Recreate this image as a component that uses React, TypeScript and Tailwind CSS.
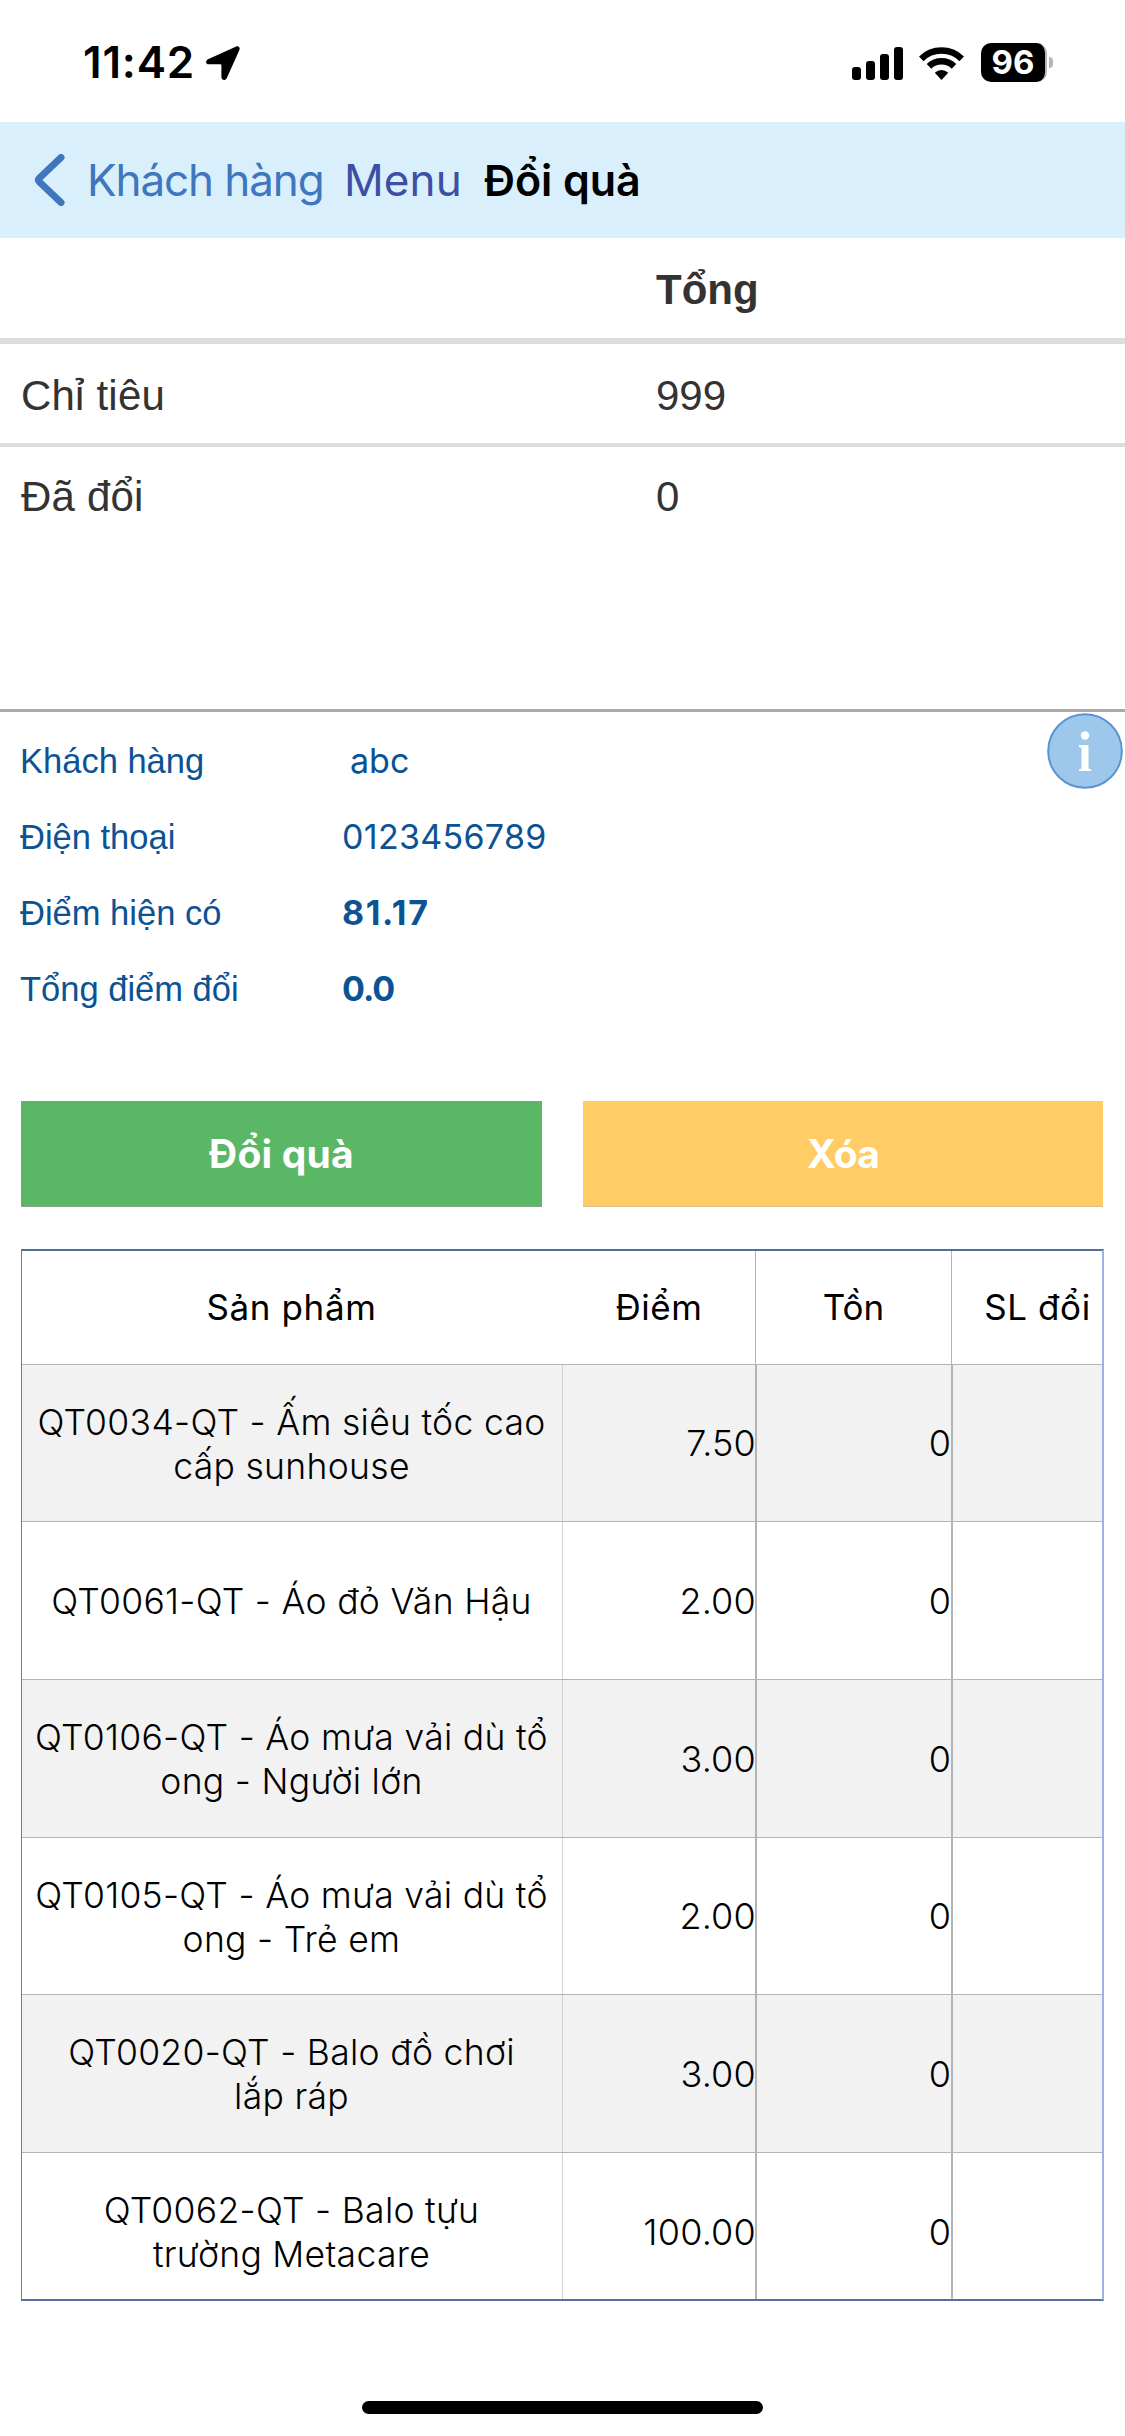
import clsx from "clsx";

const summary = [
  { label: "Chỉ tiêu", value: "999" },
  { label: "Đã đổi", value: "0" },
];

const products = [
  { name: ["QT0034-QT - Ấm siêu tốc cao", "cấp sunhouse"], points: "7.50", stock: 0 },
  { name: ["QT0061-QT - Áo đỏ Văn Hậu"], points: "2.00", stock: 0 },
  { name: ["QT0106-QT - Áo mưa vải dù tổ", "ong - Người lớn"], points: "3.00", stock: 0 },
  { name: ["QT0105-QT - Áo mưa vải dù tổ", "ong - Trẻ em"], points: "2.00", stock: 0 },
  { name: ["QT0020-QT - Balo đồ chơi", "lắp ráp"], points: "3.00", stock: 0 },
  { name: ["QT0062-QT - Balo tựu", "trường Metacare"], points: "100.00", stock: 0 },
];

function StatusBar() {
  return (
    <div className="flex h-[122px] items-start justify-between pl-[83px] pr-[72px] pt-[43px]">
      <div className="flex items-center">
        <span className="w-[123px] whitespace-nowrap text-[44px] font-semibold leading-[39px] tracking-[0.8px]">11:42</span>
        <svg width="34" height="34" viewBox="0 0 34 34" fill="#000">
          <path d="M30.2.6 2 13.3C-.8 14.600-.3 18.300 2.700 18.300H14.200c.8 0 1.200.4 1.200 1.200V31c0 3.400 4 4 5.300 1.200L33.400 4C34.400 1.500 32.500-.400 30.200.6z" />
        </svg>
      </div>
      <div className="flex items-center">
        <svg width="51" height="36" viewBox="0 0 51 36" fill="#000">
          <rect x="0" y="22" width="9" height="13" rx="3" />
          <rect x="14" y="16" width="9" height="19" rx="3" />
          <rect x="28" y="9" width="9" height="26" rx="3" />
          <rect x="42" y="2" width="9" height="33" rx="3" />
        </svg>
        <svg className="ml-[16px]" width="45" height="36" viewBox="0 0 45 36" fill="none" stroke="#000" strokeWidth="6.500">
          <path d="M2.300 13.800a29 29 0 0 1 40.400 0" />
          <path d="M10 21.300a18 18 0 0 1 25 0" />
          <path d="M22.500 35 15.800 27.700a10 10 0 0 1 13.400 0z" fill="#000" stroke="none" />
        </svg>
        <div className="ml-[17px] flex h-[39px] w-[66px] items-center justify-center overflow-hidden rounded-[10px] border-r-2 border-[#b5b5b5] bg-black text-[33px] font-bold leading-none text-white">
          96
        </div>
        <div className="ml-[2px] h-[11px] w-1 rounded-r-full bg-[#b5b5b5]" />
      </div>
    </div>
  );
}

function NavBar() {
  return (
    <div className="flex h-[116px] items-center bg-[#d9f0fc] pl-[33px] text-[44px] leading-none">
      <svg width="32" height="52" viewBox="0 0 32 52" fill="none" stroke="#3f76bd" strokeWidth="7" strokeLinecap="round" strokeLinejoin="round">
        <path d="M28 3.500 6.500 24Q4.500 26 6.500 28L28 48.500" />
      </svg>
      <span className="ml-[22px] w-[257px] whitespace-nowrap tracking-[-1.100px] text-[#3f76bd]">Khách hàng</span>
      <span className="w-[140px] whitespace-nowrap tracking-[0.100px] text-[#3b4fa5]">Menu</span>
      <span className="whitespace-nowrap text-[43px] font-semibold tracking-[-0.100px]">Đổi quà</span>
    </div>
  );
}

function Summary() {
  return (
    <div className="h-[471px] font-['Liberation_Sans',Arial,sans-serif] text-[42px] leading-none text-[#333]">
      <div className="flex h-[106px] items-center border-b-[6px] border-[#ddd] pl-[656px] pt-[4px] font-bold">Tổng</div>
      {summary.map((row, i) => (
        <div
          key={row.label}
          className={clsx("flex items-center pl-[21px]", i === 0 ? "h-[103px] border-b-[4px] border-[#ddd] pt-[4px]" : "h-[99px]")}
        >
          <span className="w-[635px] tracking-[0.200px]">{row.label}</span>
          <span>{row.value}</span>
        </div>
      ))}
    </div>
  );
}

function InfoRow({ label, value, className }: { label: string; value: string; className?: string }) {
  return (
    <div className="flex h-[76px] items-center">
      <span className="w-[322px] whitespace-nowrap font-['Liberation_Sans',Arial,sans-serif] text-[34.500px]">{label}</span>
      <span className={clsx("whitespace-nowrap text-[34px]", className)}>{value}</span>
    </div>
  );
}

function CustomerInfo() {
  return (
    <div className="flex h-[392px] justify-between border-t-[3px] border-[#aaa] pl-[20px] pr-[2px] leading-none text-[#0b5394]">
      <div className="pt-[11px]">
        <InfoRow label="Khách hàng" value="abc" className="pl-[8px]" />
        <InfoRow label="Điện thoại" value="0123456789" className="tracking-[0.300px]" />
        <InfoRow label="Điểm hiện có" value="81.17" className="font-bold tracking-[1.600px]" />
        <InfoRow label="Tổng điểm đổi" value="0.0" className="font-bold tracking-[-1px]" />
      </div>
      <svg className="mt-px" width="76" height="76" viewBox="0 0 76 76">
        <circle cx="38" cy="38" r="36.800" fill="#9dc8eb" stroke="#5a94d0" strokeWidth="2" />
        <circle cx="38" cy="22.500" r="4.200" fill="#fff" />
        <path d="M32 32h9.500v23.500l2.500 1V58H32v-1.500l2.500-1V35L32 34z" fill="#fff" />
      </svg>
    </div>
  );
}

function Actions() {
  return (
    <div className="flex justify-between pl-[21px] pr-[22px] text-[39px] font-bold leading-none text-white">
      <button className="h-[106px] w-[521px] border-b border-[#8ba58c] bg-[#5ab766] tracking-[0.200px]">Đổi quà</button>
      <button className="h-[106px] w-[520px] border-b border-[#d9c28f] bg-[#ffcc66] tracking-[-0.800px]">Xóa</button>
    </div>
  );
}

function ProductTable() {
  return (
    <div className="ml-[21px] mt-[42px] h-[1052px] w-[1083px] overflow-hidden border-b-2 border-l border-r-2 border-t-2 border-b-[#5a6ea5] border-l-[#5b7fc0] border-r-[#9db2e0] border-t-[#4f6f9f] bg-white">
      <div className="grid h-[114px] grid-cols-[541px_193px_196px_1fr] border-b border-[#b4b4b4] text-center text-[35px] leading-[113px] tracking-[0.600px]">
        <div className="pr-[2px]">Sản phẩm</div>
        <div className="border-r border-[#b4b4b4]">Điểm</div>
        <div className="border-r border-[#b4b4b4] tracking-normal">Tồn</div>
        <div className="whitespace-nowrap pl-[21px]">SL đổi</div>
      </div>
      {products.map((product, i) => (
        <div
          key={product.name[0]}
          className={clsx(
            "grid grid-cols-[541px_194px_196px_1fr] border-b border-[#b4b4b4] text-[35.500px] font-light leading-[44px]",
            i % 3 === 0 ? "h-[157px]" : "h-[158px]",
            i % 2 === 0 && "bg-[#f2f2f2]"
          )}
        >
          <div className="flex flex-col items-center justify-center whitespace-nowrap border-r border-[#d2d2d2] pr-px pt-[3px] tracking-[0.300px]">
            {product.name.map((line) => (
              <span key={line}>{line}</span>
            ))}
          </div>
          <div className="flex items-center justify-end border-r-2 border-[#b4b4b4] text-[36px] tracking-[0.200px]">
            <span className="-mr-px">{product.points}</span>
          </div>
          <div className="flex items-center justify-end border-r-2 border-[#b4b4b4] text-[36px]">{product.stock}</div>
          <div />
        </div>
      ))}
    </div>
  );
}

export default function App() {
  return (
    <div className="flex h-[2436px] w-[1125px] flex-col overflow-hidden bg-white font-['Inter',sans-serif] text-black">
      <StatusBar />
      <NavBar />
      <Summary />
      <CustomerInfo />
      <Actions />
      <ProductTable />
      <div className="mx-auto mt-[100px] h-[13px] w-[401px] rounded-full bg-black" />
    </div>
  );
}
